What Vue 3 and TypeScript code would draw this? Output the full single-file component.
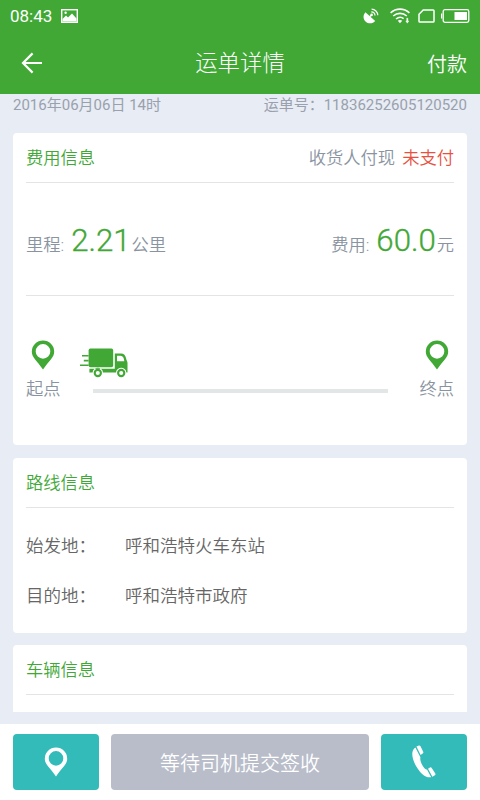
<script setup lang="ts">
interface RouteRow {
  label: string
  value: string
}

const waybill = {
  time: '2016年06月06日 14时',
  number: '11836252605120520',
  payer: '收货人付现',
  status: '未支付',
  distance: '2.21',
  fee: '60.0',
}

const route: RouteRow[] = [
  { label: '始发地：', value: '呼和浩特火车东站' },
  { label: '目的地：', value: '呼和浩特市政府' },
]
</script>

<template>
  <div class="screen">
    <header class="top">
      <div class="status-bar">
        <div class="status-left">
          <span class="clock">08:43</span>
          <svg class="picture" width="17" height="14" viewBox="0 0 17 14">
            <rect x="0.7" y="0.7" width="15.6" height="12.6" fill="none" stroke="#fff" stroke-width="1.4" />
            <path d="M1.5 12V10L5 6.5 7 8.5 11 4.5 15.5 9.5V12.5H1.5Z" fill="#fff" />
            <circle cx="4.6" cy="3.8" r="1.2" fill="#fff" />
          </svg>
        </div>
        <div class="status-right">
          <svg width="16" height="16" viewBox="0 0 16 16">
            <path d="M2.4 4.2C-.4 7.5.1 11.5 2.8 13.7 5.5 16 9.9 15.7 12.2 12.9Z" fill="#fff" />
            <path d="M6 9.5 8.6 6.9" stroke="#fff" stroke-width="1.3" />
            <circle cx="8.6" cy="6.9" r="1.3" fill="#fff" />
            <path d="M8.3 3.9A3.8 3.8 0 0 1 12 7.6M8.6 1.1A6.4 6.4 0 0 1 14.8 7.3" fill="none" stroke="#fff" stroke-width="1.2" />
          </svg>
          <svg class="wifi" width="20" height="16" viewBox="0 0 20 16">
            <path d="M.6 4.8C6-.1 14-.1 19.4 4.8M3.2 8C7.2 4.5 12.8 4.5 16.8 8M6 11C8.6 8.9 11.4 8.9 13.6 10.6" fill="none" stroke="#fff" stroke-width="1.6" />
            <path d="M7.8 12.8Q10 11.2 12.2 12.8L10 15.3Z" fill="#fff" />
            <path d="M15.8 13 17.3 15.2 18.8 13ZM16.7 10.2H17.9V13.3H16.7Z" fill="#fff" stroke="#fff" stroke-width=".4" />
          </svg>
          <svg class="sim" width="17" height="14" viewBox="0 0 17 14">
            <path d="M5.2.9H15.2Q16 .9 16 1.7V12.3Q16 13.1 15.2 13.1H1.8Q1 13.1 1 12.3V5.3Z" fill="none" stroke="#fff" stroke-width="1.5" />
          </svg>
          <svg class="battery" width="29" height="14" viewBox="0 0 29 14">
            <rect x="2.2" y=".7" width="25.6" height="12.6" rx="1.8" fill="none" stroke="#fff" stroke-width="1.3" />
            <path d="M.6 4.5V9.5" stroke="#fff" stroke-width="1.2" />
            <rect x="13.5" y="3" width="12.5" height="8" fill="#fff" />
          </svg>
        </div>
      </div>
      <nav class="nav">
        <button class="back" aria-label="返回">
          <svg width="22" height="22" viewBox="0 0 22 22">
            <path d="M11.6 1.4 2 11 11.6 20.6M2.2 11H21" fill="none" stroke="#fff" stroke-width="2.2" />
          </svg>
        </button>
        <h1 class="title">运单详情</h1>
        <button class="pay">付款</button>
      </nav>
    </header>

    <main class="content">
      <div class="meta">
        <span>{{ waybill.time }}</span>
        <span>运单号：{{ waybill.number }}</span>
      </div>

      <section class="card cost">
        <div class="card-head">
          <h2>费用信息</h2>
          <div class="payment">{{ waybill.payer }}<span class="unpaid">{{ waybill.status }}</span></div>
        </div>
        <div class="metrics">
          <div class="metric">里程:<strong>{{ waybill.distance }}</strong>公里</div>
          <div class="metric">费用:<strong>{{ waybill.fee }}</strong>元</div>
        </div>
        <div class="journey">
          <div class="stop">
            <svg width="24" height="30" viewBox="0 0 24 30">
              <path fill="#41a836" fill-rule="evenodd" d="M12 .5A11.2 11.2 0 0 0 .8 11.7C.8 17.5 6 20.5 12 29.5 18 20.5 23.2 17.5 23.2 11.7A11.2 11.2 0 0 0 12 .5ZM12 4.1A7.3 7.3 0 1 1 12 18.7 7.3 7.3 0 0 1 12 4.1Z" />
            </svg>
            <span>起点</span>
          </div>
          <div class="track">
            <svg class="truck" width="48" height="30" viewBox="0 0 48 30">
              <g fill="#41a836">
                <rect x="8.6" y=".6" width="24.6" height="18.6" rx="1.8" />
                <path d="M2 7H8.6V8.6H2ZM3.8 11.8H8.6V13.4H3.8ZM0 16.4H8.6V18H0Z" />
                <path fill-rule="evenodd" d="M34.8 5.4H41C44 5.4 45.4 7.2 46 10 46.3 12.4 47.5 13 47.5 15V24.4H46.4C45.6 18.2 36.8 18.2 36 24.4H23C22.2 18.2 13.4 18.2 12.6 24.4H9.4V20.8H34.8ZM37 7.7V13.2H44.3C44 9.8 43 7.7 40.5 7.7Z" />
              </g>
              <circle cx="17.8" cy="25" r="3.1" fill="#fff" stroke="#41a836" stroke-width="2.1" />
              <circle cx="41.2" cy="25" r="3.1" fill="#fff" stroke="#41a836" stroke-width="2.1" />
            </svg>
            <div class="rail"></div>
          </div>
          <div class="stop">
            <svg width="24" height="30" viewBox="0 0 24 30">
              <path fill="#41a836" fill-rule="evenodd" d="M12 .5A11.2 11.2 0 0 0 .8 11.7C.8 17.5 6 20.5 12 29.5 18 20.5 23.2 17.5 23.2 11.7A11.2 11.2 0 0 0 12 .5ZM12 4.1A7.3 7.3 0 1 1 12 18.7 7.3 7.3 0 0 1 12 4.1Z" />
            </svg>
            <span>终点</span>
          </div>
        </div>
      </section>

      <section class="card route">
        <div class="card-head"><h2>路线信息</h2></div>
        <div class="rows">
          <div v-for="row in route" :key="row.label" class="row">
            <span class="row-label">{{ row.label }}</span>
            <span>{{ row.value }}</span>
          </div>
        </div>
      </section>

      <section class="card vehicle">
        <div class="card-head"><h2>车辆信息</h2></div>
      </section>
    </main>

    <footer class="actions">
      <button class="action icon" aria-label="位置">
        <svg width="24" height="30" viewBox="0 0 24 30">
          <path fill="#fff" fill-rule="evenodd" d="M12 .5A11.2 11.2 0 0 0 .8 11.7C.8 17.5 6 20.5 12 29.5 18 20.5 23.2 17.5 23.2 11.7A11.2 11.2 0 0 0 12 .5ZM12 4.1A7.3 7.3 0 1 1 12 18.7 7.3 7.3 0 0 1 12 4.1Z" />
        </svg>
      </button>
      <button class="action wait">等待司机提交签收</button>
      <button class="action icon" aria-label="电话">
        <svg width="26" height="34" viewBox="0 0 26 34">
          <path d="M4.4 2.4C-.2 5 .6 13.2 4.6 20.2 8.8 27.8 14.6 33.4 20.2 32.2L16 24.6C13 24.6 8.4 16.2 9.4 12.2Z" fill="#fff" />
          <path d="M5.4 1.6 7.9.5Q8.8.2 9.4 1.1L12.2 6.8Q12.7 7.9 11.7 8.5L9.6 10ZM17 23.8 19 22.5Q20 21.9 20.7 22.9L24.3 28.4Q24.9 29.5 23.9 30.2L21.4 31.8Z" fill="#fff" />
        </svg>
      </button>
    </footer>
  </div>
</template>

<style>
body {
  margin: 0;
}
</style>

<style scoped>
.screen {
  display: flex;
  flex-direction: column;
  width: 480px;
  height: 800px;
  overflow: hidden;
  background: #e8ecf4;
  color: #8a94a1;
  font-family: Roboto, "Noto Sans CJK SC", sans-serif;
  font-weight: 350;
  font-size: 17.3px;
}

button {
  margin: 0;
  padding: 0;
  border: 0;
  background: none;
  color: #fff;
  font: inherit;
}

h1,
h2 {
  margin: 0;
  font-weight: inherit;
}

.top {
  flex: none;
  height: 94px;
  background: #41a836;
  color: #fff;
}

.status-bar {
  display: flex;
  justify-content: space-between;
  align-items: center;
  height: 32px;
  padding: 0 10px;
}

.status-left,
.status-right {
  display: flex;
  align-items: center;
}

.clock {
  width: 51px;
  font-size: 17px;
  font-weight: 400;
  line-height: 32px;
}

.wifi {
  margin-left: 11px;
}

.sim {
  margin-left: 8px;
}

.battery {
  margin-left: 6px;
}

.nav {
  display: grid;
  grid-template-columns: 1fr auto 1fr;
  align-items: center;
  height: 62px;
  padding: 0 13px 0 21px;
}

.back {
  justify-self: start;
  height: 22px;
}

.back svg {
  display: block;
}

.title {
  margin-right: 8px;
  padding-top: 1px;
  font-size: 22.4px;
  font-weight: 300;
  line-height: 61px;
}

.pay {
  justify-self: end;
  font-size: 20px;
}

.content {
  display: flex;
  flex: none;
  flex-direction: column;
  height: 630px;
  padding: 0 13px;
  box-sizing: border-box;
}

.meta {
  display: flex;
  justify-content: space-between;
  height: 39px;
  color: #98a1ad;
  font-size: 15px;
  font-weight: 400;
  line-height: 22px;
}

.card {
  flex: none;
  padding: 0 13px;
  box-sizing: border-box;
  border-radius: 4px;
  background: #fff;
}

.cost {
  height: 312px;
}

.route {
  height: 175px;
  margin-top: 13px;
}

.vehicle {
  height: 67px;
  margin-top: 12px;
  border-radius: 4px 4px 0 0;
}

.card-head {
  display: flex;
  justify-content: space-between;
  height: 49px;
  border-bottom: 1px solid #e2e5e8;
  line-height: 51px;
}

.card-head h2 {
  color: #41a836;
  font-size: 17.3px;
}

.unpaid {
  margin-left: 7px;
  color: #e8513f;
}

.metrics {
  display: flex;
  justify-content: space-between;
  height: 112px;
  border-bottom: 1px solid #e2e5e8;
  line-height: 115px;
}

.metric {
  display: flex;
  align-items: baseline;
}

.metric strong {
  margin: 0 1px 0 7px;
  color: #41a836;
  font-size: 31.2px;
  font-weight: 300;
  -webkit-text-stroke: 0.35px #41a836;
}

.journey {
  display: flex;
  justify-content: space-between;
  padding-top: 44px;
}

.stop {
  display: flex;
  flex-direction: column;
  align-items: center;
  gap: 6px;
  line-height: 26px;
}

.track {
  width: 320px;
  padding-top: 8px;
}

.truck {
  display: block;
}

.rail {
  width: 295px;
  height: 4px;
  margin: 11px 0 0 13px;
  background: #e3e6e6;
}

.rows {
  padding-top: 13px;
  color: #666;
  font-size: 17.5px;
}

.row {
  display: flex;
  line-height: 50px;
}

.row-label {
  width: 99px;
}

.actions {
  display: flex;
  gap: 12px;
  height: 76px;
  padding: 10px 13px;
  box-sizing: border-box;
  background: #fff;
}

.action {
  display: flex;
  align-items: center;
  justify-content: center;
  height: 56px;
  border-radius: 4px;
}

.icon {
  width: 86px;
  background: #32bbb8;
}

.wait {
  flex: 1;
  background: #b8bdc9;
  font-size: 20px;
}
</style>
